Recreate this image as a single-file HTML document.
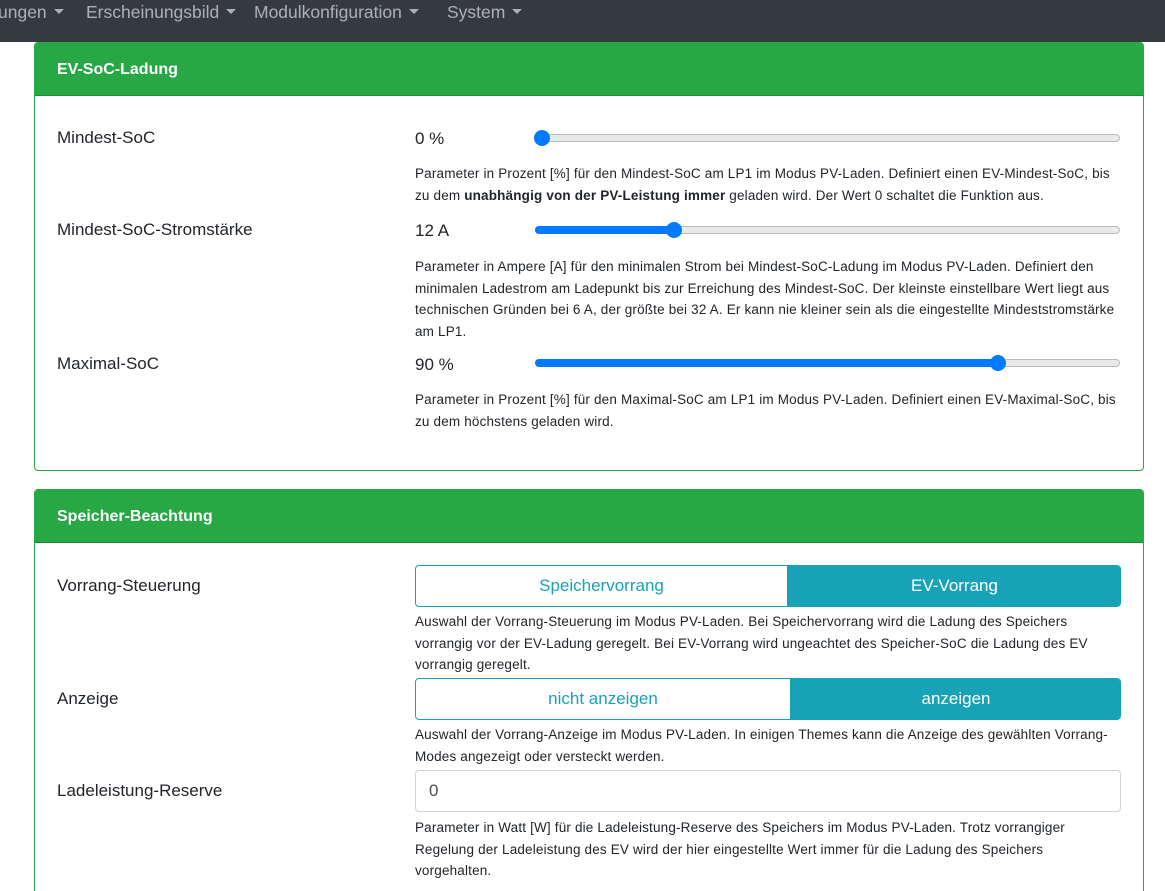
<!DOCTYPE html>
<html><head><meta charset="utf-8"><style>
*{box-sizing:border-box;margin:0;padding:0}
html,body{width:1165px;height:891px;overflow:hidden}
body{background:#fff;font-family:"Liberation Sans",sans-serif;color:#212529;position:relative}
.nav{position:absolute;left:0;top:0;width:1165px;height:42px;background:#343a40;color:rgba(255,255,255,.6);font-size:17.5px}
.nav span{position:absolute;top:2px;white-space:nowrap}
.car{display:inline-block;border-left:5px solid transparent;border-right:5px solid transparent;border-top:5px solid rgba(255,255,255,.6);vertical-align:middle;margin-left:7px;margin-top:-3px}
.card{position:absolute;left:34px;width:1110px;border:1px solid #28a745;border-radius:4px;overflow:hidden}
.hd{background:#28a745;color:#fff;font-weight:bold;font-size:16px;height:53px;line-height:53px;padding-left:22px;border-bottom:1px solid #1e8a38}
.a{position:absolute}
.lbl{position:absolute;left:57px;font-size:17px}
.val{position:absolute;left:415px;font-size:17px}
.help{position:absolute;left:415px;font-size:13.5px;letter-spacing:0.17px;line-height:21.5px;white-space:nowrap}
.trk{position:absolute;left:535px;width:585px;height:8px;border:1px solid #bbb;background:#e9e9e9;border-radius:4px}
.fill{position:absolute;left:535px;height:8px;background:#007bff;border-radius:4px}
.th{position:absolute;width:16px;height:16px;border-radius:50%;background:#007bff}
.grp{position:absolute;left:415px;width:706px;height:42px;border:1px solid #17a2b8;border-radius:4px;overflow:hidden;font-size:17px}
.grp div{position:absolute;top:0;height:100%;line-height:40px;text-align:center}
</style></head><body>
<div class="nav">
<span style="left:-2px">ungen<i class="car"></i></span>
<span style="left:86px">Erscheinungsbild<i class="car"></i></span>
<span style="left:254px">Modulkonfiguration<i class="car"></i></span>
<span style="left:447px">System<i class="car"></i></span>
</div>
<div class="card" style="top:42px;height:429px"><div class="hd">EV-SoC-Ladung</div></div>
<div class="card" style="top:489px;height:430px"><div class="hd">Speicher-Beachtung</div></div>

<div class="lbl" style="top:128px">Mindest-SoC</div>
<div class="val" style="top:129px">0 %</div>
<div class="trk" style="top:134px"></div>
<div class="th" style="left:534px;top:130px"></div>
<div class="help" style="top:163px">Parameter in Prozent [%] für den Mindest-SoC am LP1 im Modus PV-Laden. Definiert einen EV-Mindest-SoC, bis<br>zu dem <b>unabhängig von der PV-Leistung immer</b> geladen wird. Der Wert 0 schaltet die Funktion aus.</div>

<div class="lbl" style="top:220px">Mindest-SoC-Stromstärke</div>
<div class="val" style="top:221px">12 A</div>
<div class="trk" style="top:226px"></div>
<div class="fill" style="top:226px;width:140px"></div>
<div class="th" style="left:666px;top:222px"></div>
<div class="help" style="top:256px">Parameter in Ampere [A] für den minimalen Strom bei Mindest-SoC-Ladung im Modus PV-Laden. Definiert den<br>minimalen Ladestrom am Ladepunkt bis zur Erreichung des Mindest-SoC. Der kleinste einstellbare Wert liegt aus<br>technischen Gründen bei 6 A, der größte bei 32 A. Er kann nie kleiner sein als die eingestellte Mindeststromstärke<br>am LP1.</div>

<div class="lbl" style="top:354px">Maximal-SoC</div>
<div class="val" style="top:355px">90 %</div>
<div class="trk" style="top:359px"></div>
<div class="fill" style="top:359px;width:465px"></div>
<div class="th" style="left:990px;top:355px"></div>
<div class="help" style="top:389px">Parameter in Prozent [%] für den Maximal-SoC am LP1 im Modus PV-Laden. Definiert einen EV-Maximal-SoC, bis<br>zu dem höchstens geladen wird.</div>

<div class="lbl" style="top:576px">Vorrang-Steuerung</div>
<div class="grp" style="top:565px"><div style="left:0;width:371px;color:#17a2b8">Speichervorrang</div><div style="left:371px;width:335px;background:#17a2b8;color:#fff">EV-Vorrang</div></div>
<div class="help" style="top:611px">Auswahl der Vorrang-Steuerung im Modus PV-Laden. Bei Speichervorrang wird die Ladung des Speichers<br>vorrangig vor der EV-Ladung geregelt. Bei EV-Vorrang wird ungeachtet des Speicher-SoC die Ladung des EV<br>vorrangig geregelt.</div>

<div class="lbl" style="top:689px">Anzeige</div>
<div class="grp" style="top:678px"><div style="left:0;width:374px;color:#17a2b8">nicht anzeigen</div><div style="left:374px;width:332px;background:#17a2b8;color:#fff">anzeigen</div></div>
<div class="help" style="top:724px">Auswahl der Vorrang-Anzeige im Modus PV-Laden. In einigen Themes kann die Anzeige des gewählten Vorrang-<br>Modes angezeigt oder versteckt werden.</div>

<div class="lbl" style="top:781px">Ladeleistung-Reserve</div>
<div class="a" style="left:415px;top:770px;width:706px;height:42px;border:1px solid #ced4da;border-radius:4px;font-size:17px;line-height:40px;padding-left:13px;color:#495057">0</div>
<div class="help" style="top:817px">Parameter in Watt [W] für die Ladeleistung-Reserve des Speichers im Modus PV-Laden. Trotz vorrangiger<br>Regelung der Ladeleistung des EV wird der hier eingestellte Wert immer für die Ladung des Speichers<br>vorgehalten.</div>
</body></html>
